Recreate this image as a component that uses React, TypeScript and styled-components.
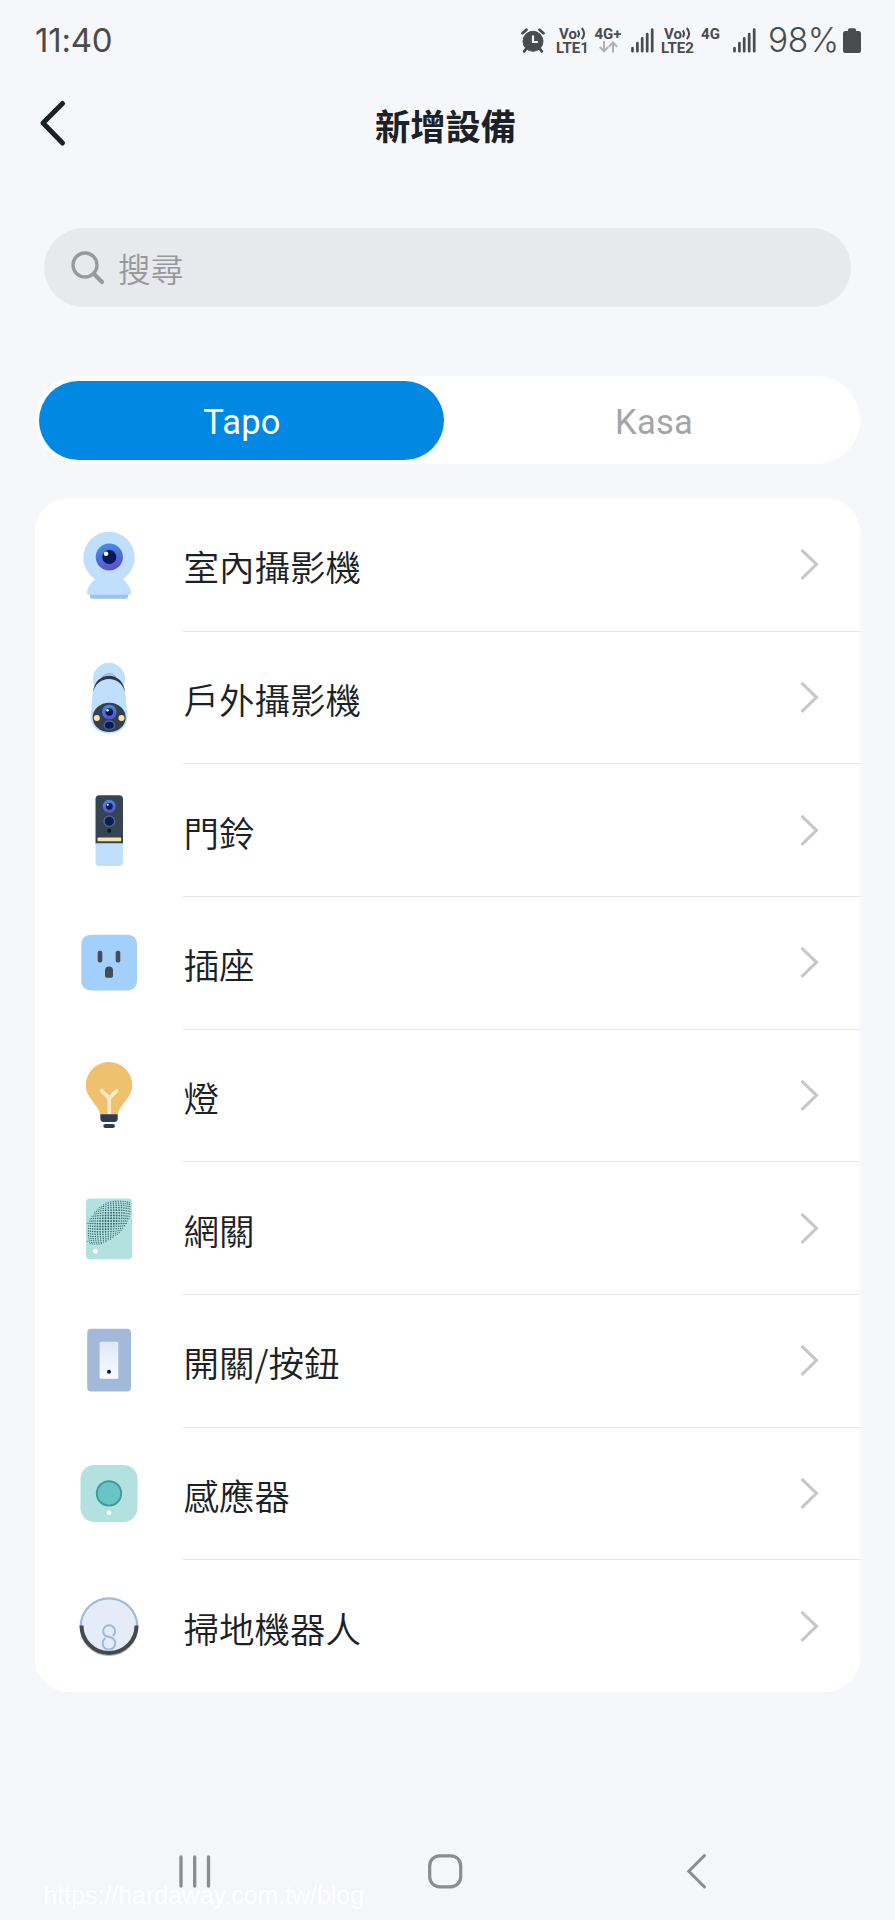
import React from "react";
import styled, { createGlobalStyle } from "styled-components";

const Global = createGlobalStyle`
  * { box-sizing: border-box; }
  body { margin: 0; background: #f5f7fb; }
`;

const cjk = `"Noto Sans CJK TC", sans-serif`;

const Screen = styled.main`
  width: 895px;
  height: 1920px;
  display: flex;
  flex-direction: column;
  background: #f5f7fb;
  font-family: ${cjk};
  overflow: hidden;
`;

const StatusBar = styled.header`
  height: 80px;
  padding: 0 34px 0 35px;
  display: flex;
  justify-content: space-between;
  align-items: center;
  color: #4a4b4d;
`;

const Clock = styled.time`
  font: 400 33px/40px Inter, sans-serif;
  letter-spacing: -0.2px;
`;

const StatusIcons = styled.div`
  display: flex;
  align-items: center;
  height: 26px;
`;

const Stack = styled.div<{ $w: number; $ml: number }>`
  width: ${(p) => p.$w}px;
  margin-left: ${(p) => p.$ml}px;
  height: 26px;
  display: flex;
  flex-direction: column;
  align-items: center;
  white-space: nowrap;
  font: 700 15px/14px Roboto, sans-serif;
`;

const StackLine = styled.span`
  display: flex;
  align-items: center;
  height: 14px;
`;

const Glyph = styled.svg<{ $ml?: number }>`
  display: block;
  flex: none;
  overflow: visible;
  margin-left: ${(p) => p.$ml ?? 0}px;
`;

const Battery = styled.span`
  margin-left: 12px;
  width: 72px;
  font: 350 33.5px/40px Inter, sans-serif;
  letter-spacing: -0.4px;
  white-space: nowrap;
`;

const TitleBar = styled.div`
  height: 90px;
  display: grid;
  grid-template-columns: 80px 1fr 84px;
  align-items: center;
`;

const BackButton = styled.button`
  border: 0;
  padding: 0 0 4px 38px;
  background: none;
`;

const Title = styled.h1`
  margin: 0;
  text-align: center;
  color: #1b2125;
  font: 700 35.3px/50px ${cjk};
`;

const SearchBox = styled.div`
  margin: 58px 44px 0;
  height: 79px;
  border-radius: 40px;
  background: #e8e9ed;
  display: flex;
  align-items: center;
  gap: 14px;
  padding-left: 27px;
  color: #97999c;
  font-size: 32.7px;
  font-weight: 350;
`;

const Tabs = styled.nav`
  margin: 69px 35px 0;
  height: 88px;
  padding: 4.5px 4px;
  border-radius: 44px;
  background: #fff;
  display: grid;
  grid-template-columns: 405px 1fr;
`;

const Tab = styled.button<{ $active?: boolean }>`
  border: 0;
  border-radius: 40px;
  padding: ${(p) => (p.$active ? "4px 0 0 1px" : "4px 0 0 8px")};
  background: ${(p) => (p.$active ? "#0088e2" : "transparent")};
  color: ${(p) => (p.$active ? "#fff" : "#a3a5a7")};
  font: 400 34.5px/40px Roboto, sans-serif;
  letter-spacing: 0.2px;
`;

const Card = styled.ul`
  list-style: none;
  margin: 34px 35px 0;
  padding: 0;
  height: 1194px;
  border-radius: 34px;
  background: #fff;
  display: flex;
  flex-direction: column;
`;

const Row = styled.li`
  flex: 1;
  display: flex;
  align-items: stretch;
  padding-left: 34px;
`;

const IconSlot = styled.div`
  width: 114px;
  display: flex;
  align-items: center;
`;

const RowBody = styled.div<{ $last?: boolean }>`
  flex: 1;
  display: flex;
  align-items: center;
  justify-content: space-between;
  padding: 0 41px 0 0.5px;
  box-shadow: ${(p) => (p.$last ? "none" : "0 1px 0 #e6e7e9")};
`;

const Label = styled.span`
  color: #1b2125;
  font-size: 35.5px;
  font-weight: 350;
  line-height: 50px;
  padding-top: 4px;
`;

const NavBar = styled.footer`
  position: relative;
  margin-top: auto;
  height: 104px;
  background: #f5f6f8;
  display: flex;
  padding: 38px 0 0 179px;
  align-items: flex-start;
`;

const Watermark = styled.span`
  position: absolute;
  left: 43.5px;
  bottom: 11px;
  color: #fff;
  font: 400 24.9px/28px "Liberation Sans", Arial, sans-serif;
`;

const Signal = ({ ml }: { ml: number }) => (
  <Glyph $ml={ml} width="23" height="25" viewBox="0 0 23 25" fill="none" stroke="#4a4b4d" strokeWidth="2.7" strokeLinecap="round">
    <path d="M1.5 23.2v-3M6.4 23.2v-8M11.2 23.2V10.4M16.2 23.2V6M21.2 23.2V1.5" />
  </Glyph>
);

const Volte = ({ n, ml }: { n: number; ml: number }) => (
  <Stack $w={33} $ml={ml}>
    <StackLine>
      Vo
      <svg width="9" height="14" viewBox="0 0 9 14" fill="none" stroke="#4a4b4d" strokeWidth="2">
        <path d="M0.8 3.5q2.4 3.3 0 6.6M4.8 1q4.6 5.6 0 11.2" />
      </svg>
    </StackLine>
    <StackLine>LTE{n}</StackLine>
  </Stack>
);

const Lens = ({ y, r }: { y: number; r: number }) => (
  <g>
    <circle cx="0.3" cy={y} r={r} fill="url(#lens)" />
    <circle cx="0.3" cy={y} r={r * 0.52} fill="#081852" />
    <circle cx={0.3 - r * 0.24} cy={y - r * 0.24} r={r * 0.17} fill="#fff" />
  </g>
);

const IndoorCamera = () => (
  <>
    <circle cy="-6.5" r="25.7" fill="#bfdffd" />
    <path d="M-12 14C-18 18-22 24-22 29Q-22 31-20 31H20Q22 31 22 29C22 24 18 18 12 14Z" fill="#bfdffd" />
    <path d="M-19 30.8H19V32.5Q19 34.7 17 34.7H-17Q-19 34.7-19 32.5Z" fill="#9fc0ec" />
    <Lens y={-7} r={13.6} />
  </>
);

const OutdoorCamera = () => (
  <>
    <circle cy="-18.3" r="16" fill="#bfdffd" />
    <path d="M-7-20Q0-27 7-20" fill="#b7cbe3" stroke="#8fa9c6" strokeWidth="1" />
    <path d="M-16-4C-15-27 15-27 16-4Z" fill="#2b384b" />
    <path d="M-16.5-3C-13-23 13-23 16.5-3L18.4 20C18.4 42-18.4 42-18.4 20Z" fill="#bfdffd" />
    <ellipse cx="0.2" cy="20.4" rx="16.5" ry="14.7" fill="#344052" />
    <Lens y={15} r={7.3} />
    <circle cx="-12.2" cy="21" r="3" fill="#ffe5a3" />
    <circle cx="12.5" cy="21" r="3" fill="#ffe5a3" />
    <ellipse cx="0.3" cy="28.2" rx="5.2" ry="4.2" fill="#091b58" stroke="#53637f" strokeWidth="1.4" />
  </>
);

const Doorbell = () => (
  <>
    <path d="M-13.5 12H14V32Q14 36 10 36H-9.5Q-13.5 36-13.5 32Z" fill="#bfdffd" />
    <path d="M-13.5 13.3V-30.7Q-13.5-34.7-9.5-34.7H10Q14-34.7 14-30.7V13.3Z" fill="#364354" />
    <Lens y={-23.7} r={6.5} />
    <circle cx="0.3" cy="-8.7" r="5.3" fill="#0a1c58" stroke="#53637f" strokeWidth="1.5" />
    <circle cx="0.3" cy="0.7" r="2" fill="#0d1520" />
    <rect x="-11.5" y="7.6" width="23.7" height="3.7" rx="1" fill="#fbe3a4" />
  </>
);

const Plug = () => (
  <>
    <rect x="-27.7" y="-27.3" width="55.7" height="55.7" rx="9" fill="#a3cffb" />
    <rect x="-11.3" y="-11.3" width="4.6" height="11.7" rx="2" fill="#444d55" />
    <rect x="6.7" y="-11.3" width="4.6" height="11.7" rx="2" fill="#444d55" />
    <path d="M-4 8.4a4 4 0 0 1 8 0V14q0 1.7-1.7 1.7H-2.3Q-4 15.7-4 14Z" fill="#444d55" />
  </>
);

const Bulb = () => (
  <>
    <path d="M-8.7 19.5C-11 9-23.2 3-23.2-9.8A23.2 23.2 0 0 1 23.2-9.8C23.2 3 11 9 8.7 19.5Z" fill="#efc06d" />
    <path d="M-7.3-4.3L0.3 3.3L7.7-4.3M0.3 3.3V19" fill="none" stroke="#fdeac8" strokeWidth="3.7" strokeLinecap="round" />
    <path d="M-8.7 19.2H8.7V23.5Q8.7 27 5.2 27H-5.2Q-8.7 27-8.7 23.5Z" fill="#2e3b52" />
    <rect x="-5.7" y="29" width="11.6" height="4" rx="2" fill="#2e3b52" />
  </>
);

// Speaker grille: a square grid bulging outwards, cut to a diagonal ellipse.
const hubDots: { x: number; y: number; r: number }[] = [];
for (let i = -14; i <= 14; i++) {
  for (let j = -14; j <= 14; j++) {
    const gx = i * 2.8;
    const gy = j * 2.8;
    const along = (gx - gy) * Math.SQRT1_2;
    const across = (gx + gy) * Math.SQRT1_2;
    const d = Math.hypot(along / 37, across / 20);
    if (d > 1) continue;
    const squeeze = 1 - 0.2 * d * d;
    const x = -0.7 + gx * squeeze;
    const y = -7 + gy * squeeze;
    if (x > -21.5 && x < 21.5 && y > -27.5) {
      hubDots.push({ x, y, r: 1.05 - 0.5 * d });
    }
  }
}

const Hub = () => (
  <>
    <rect x="-23" y="-29.4" width="46.2" height="60.7" rx="4" fill="#b2e1df" />
    {hubDots.map((d, i) => (
      <circle key={i} cx={d.x} cy={d.y} r={d.r} fill="#35686c" />
    ))}
    <circle cx="-13.7" cy="23.3" r="2.4" fill="#fff" />
  </>
);

const Switch = () => (
  <>
    <rect x="-21.8" y="-31.3" width="43.8" height="62.7" rx="4" fill="#a3b9da" />
    <rect x="-9.4" y="-18.3" width="18.7" height="37" rx="1.5" fill="url(#paddle)" />
    <circle cy="11.7" r="2" fill="#0b1248" />
  </>
);

const Sensor = () => (
  <>
    <rect x="-28.5" y="-28" width="57" height="57" rx="14" fill="#b2e1df" />
    <circle cy="0.4" r="12.2" fill="#68c5c5" stroke="#44989a" strokeWidth="1.9" />
    <circle cy="19.7" r="2.3" fill="#fff" />
  </>
);

const Vacuum = () => (
  <>
    <circle cy="0.6" r="28.3" fill="#e4ecfa" stroke="#a3bad6" strokeWidth="2.2" />
    <path d="M-27.5-0.5A27.5 27.5 0 0 0 27.5-0.5" fill="none" stroke="#48484a" strokeWidth="4" />
    <path d="M4.5 9.3A6 6 0 1 0-4.3 9.3C-2.5 11.2 1.5 10.5 3.8 12.3A6.3 6.3 0 1 1-4.2 12.5" fill="none" stroke="#a3bad6" strokeWidth="2.1" strokeLinecap="round" />
  </>
);

const devices: { name: string; Art: () => React.ReactElement }[] = [
  { name: "室內攝影機", Art: IndoorCamera },
  { name: "戶外攝影機", Art: OutdoorCamera },
  { name: "門鈴", Art: Doorbell },
  { name: "插座", Art: Plug },
  { name: "燈", Art: Bulb },
  { name: "網關", Art: Hub },
  { name: "開關/按鈕", Art: Switch },
  { name: "感應器", Art: Sensor },
  { name: "掃地機器人", Art: Vacuum },
];

export default function App() {
  return (
    <Screen>
      <Global />
      <StatusBar>
        <Clock>11:40</Clock>
        <StatusIcons>
          <Glyph width="24" height="25" viewBox="0 0 24 25" fill="none" stroke="#4a4b4d">
            <circle cx="12" cy="13.3" r="10" fill="#4a4b4d" strokeWidth="1" />
            <path d="M1.5 5.2L5.5 1.7M22.5 5.2L18.5 1.7M5 21L3.2 23.3M19 21l1.8 2.3" strokeWidth="2.8" strokeLinecap="round" />
            <path d="M12 7.5v6.5h4.8" stroke="#f5f7fb" strokeWidth="2.2" />
          </Glyph>
          <Volte n={1} ml={11} />
          <Stack $w={26} $ml={6}>
            <StackLine>4G+</StackLine>
            <svg width="19" height="12" viewBox="0 0 19 12" fill="none" stroke="#b0b1b4" strokeWidth="2">
              <path d="M5 0v10M0.8 6L5 10.3L9.2 6M14 11.5V1.5M9.8 5.8L14 1.5L18.2 5.8" />
            </svg>
          </Stack>
          <Signal ml={10} />
          <Volte n={2} ml={7} />
          <Stack $w={21} $ml={6}>
            <StackLine>4G</StackLine>
          </Stack>
          <Signal ml={12} />
          <Battery>98%</Battery>
          <Glyph $ml={3} width="18" height="25" viewBox="0 0 18 25" fill="#4a4b4d">
            <path d="M5 3V2Q5 0.3 6.7 0.3H11.3Q13 0.3 13 2V3H15.5Q18 3 18 5.5V22.5Q18 25 15.5 25H2.5Q0 25 0 22.5V5.5Q0 3 2.5 3Z" />
          </Glyph>
        </StatusIcons>
      </StatusBar>

      <TitleBar>
        <BackButton aria-label="返回">
          <Glyph width="28" height="46" viewBox="0 0 28 46" fill="none" stroke="#1b2125" strokeWidth="5" strokeLinecap="round" strokeLinejoin="round">
            <path d="M24.5 3.5L5 23L24.5 43" />
          </Glyph>
        </BackButton>
        <Title>新增設備</Title>
      </TitleBar>

      <SearchBox>
        <Glyph width="33" height="34" viewBox="0 0 33 34" fill="none" stroke="#97999c" strokeLinecap="round">
          <circle cx="14" cy="14" r="12" strokeWidth="3.3" />
          <path d="M23 23L31 31" strokeWidth="4.2" />
        </Glyph>
        <span>搜尋</span>
      </SearchBox>

      <Tabs>
        <Tab $active>Tapo</Tab>
        <Tab>Kasa</Tab>
      </Tabs>

      <svg width="0" height="0" aria-hidden="true" style={{ display: "block" }}>
        <defs>
          <linearGradient id="lens" x1="0" y1="0" x2="0.3" y2="1">
            <stop offset="0" stopColor="#4195e6" />
            <stop offset="1" stopColor="#5855cf" />
          </linearGradient>
          <linearGradient id="paddle" x1="0" y1="0" x2="0" y2="1">
            <stop offset="0" stopColor="#dfe7f8" />
            <stop offset="1" stopColor="#fafcff" />
          </linearGradient>
        </defs>
      </svg>

      <Card>
        {devices.map(({ name, Art }, i) => (
          <Row key={name}>
            <IconSlot>
              <Glyph width="80" height="100" viewBox="-40 -50 80 100">
                <Art />
              </Glyph>
            </IconSlot>
            <RowBody $last={i === devices.length - 1}>
              <Label>{name}</Label>
              <Glyph width="19" height="32" viewBox="0 0 19 32" fill="none" stroke="#c6c7c9" strokeWidth="3">
                <path d="M1.5 1.8L16.5 16.3L1.5 30.8" />
              </Glyph>
            </RowBody>
          </Row>
        ))}
      </Card>

      <NavBar>
        <Glyph width="32" height="35" viewBox="0 0 32 35" stroke="#8c8c8c" strokeWidth="3.3" strokeLinecap="round">
          <path d="M2 3V32M15.7 3V32M29.5 3V32" />
        </Glyph>
        <Glyph $ml={217} width="34" height="35" viewBox="0 0 34 35" fill="none" stroke="#8c8c8c" strokeWidth="3.2">
          <rect x="1.7" y="1.8" width="31" height="31" rx="10" />
        </Glyph>
        <Glyph $ml={225} width="20" height="35" viewBox="0 0 20 35" fill="none" stroke="#8c8c8c" strokeWidth="3" strokeLinecap="round">
          <path d="M17.5 1.5L1.8 17.3L17.5 33" />
        </Glyph>
        <Watermark>https://hardaway.com.tw/blog</Watermark>
      </NavBar>
    </Screen>
  );
}
